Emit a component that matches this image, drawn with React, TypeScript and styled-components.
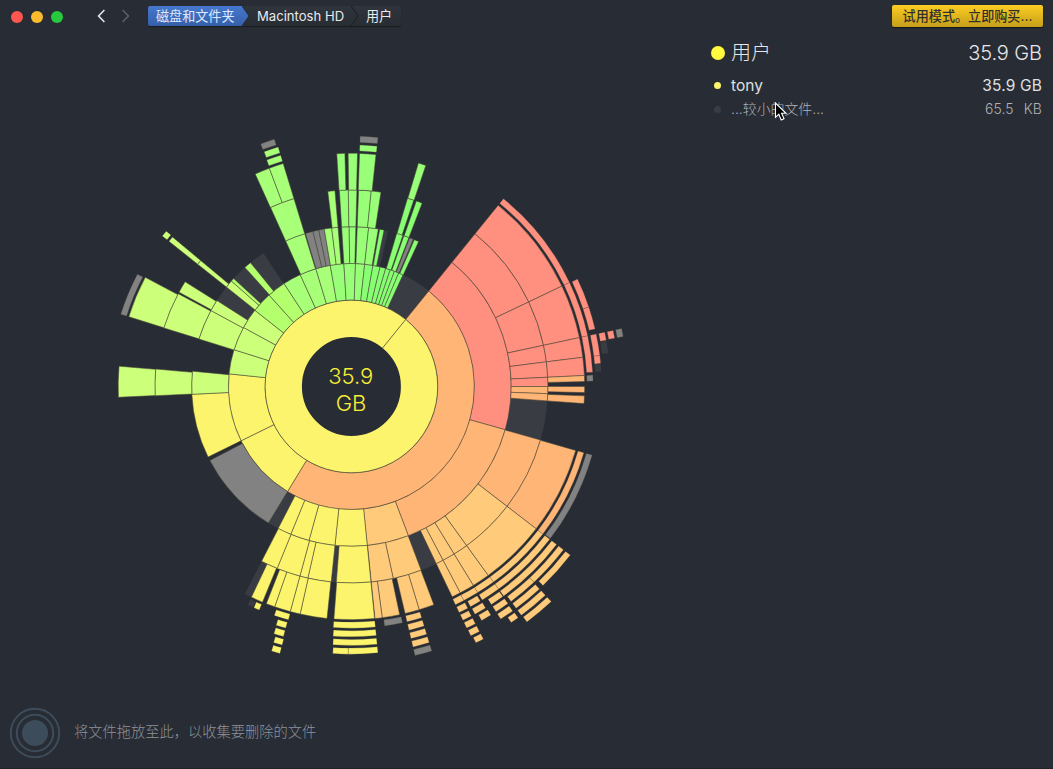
import React from "react";
import styled, { createGlobalStyle } from "styled-components";

const GlobalStyle = createGlobalStyle`
  * { box-sizing: border-box; }
  body { margin: 0; background: #282c34; overflow: hidden; }
`;

const Window = styled.div`
  position: relative;
  display: flex;
  flex-direction: column;
  width: 1053px;
  height: 769px;
  background: #282c34;
  border-bottom: 1px solid #1f2227;
  font-family: Inter, "Noto Sans CJK SC", sans-serif;
  color: #e4e5e6;
`;

const TitleBar = styled.header`
  display: flex;
  align-items: center;
  height: 33px;
  padding: 0 10px 0 11px;
`;

const Lights = styled.div`
  display: flex;
  gap: 8px;
  margin-right: 32px;
`;

const Light = styled.i<{ $color: string }>`
  width: 12px;
  height: 12px;
  border-radius: 50%;
  background: ${(p) => p.$color};
`;

const NavArrows = styled.svg`
  width: 40px;
  height: 20px;
  margin: 0 13px 1px 0;
  fill: none;
  stroke-width: 1.6;
`;

const Breadcrumb = styled.nav`
  display: flex;
  height: 20px;
  border-radius: 2px;
  background: linear-gradient(#30343c, #282c33);
  box-shadow: 0 1px 1px rgba(0, 0, 0, 0.4);
  margin: 0 auto 1px 0;
`;

const Crumb = styled.a<{ $width: number; $active?: boolean; $pad: number }>`
  position: relative;
  width: ${(p) => p.$width}px;
  padding-left: ${(p) => p.$pad}px;
  font-size: 13.1px;
  line-height: 20px;
  white-space: nowrap;
  color: ${(p) => (p.$active ? "#dde9ff" : "#e8eaec")};
  border-radius: 2px 0 0 2px;
  background: ${(p) => (p.$active ? "linear-gradient(#4678ce, #365fa9)" : "none")};
`;

const CrumbTip = styled.svg`
  position: absolute;
  left: 100%;
  top: 0;
  width: 8px;
  height: 20px;
`;

const BuyButton = styled.button`
  width: 151px;
  height: 22px;
  margin-bottom: 1px;
  padding: 0;
  border: 0;
  border-radius: 2px;
  background: linear-gradient(#fccd22, #c59f1a);
  box-shadow: 0 1px 1px rgba(0, 0, 0, 0.5);
  color: #30302c;
  font: 500 13.1px/22px Inter, "Noto Sans CJK SC", sans-serif;
  white-space: nowrap;
`;

const Content = styled.main`
  display: flex;
  flex: 1;
`;

const ChartPane = styled.section`
  width: 704px;
`;

const Chart = styled.svg`
  display: block;
  width: 704px;
  height: 660px;
`;

const Total = styled.text`
  font-family: Inter, sans-serif;
  font-size: 22px;
  font-weight: 300;
  fill: #f8ee35;
  text-anchor: middle;
`;

const FileList = styled.aside`
  width: 349px;
  padding: 6px 11px 0 7px;
`;

const Row = styled.div<{ $h: number; $size: number; $weight: number; $color: string }>`
  display: flex;
  align-items: center;
  height: ${(p) => p.$h}px;
  font-size: ${(p) => p.$size}px;
  font-weight: ${(p) => p.$weight};
  color: ${(p) => p.$color};
  white-space: pre;
`;

const DotCell = styled.span`
  display: flex;
  justify-content: center;
  width: 14px;
  margin-right: 6px;
`;

const Dot = styled.i<{ $size: number; $color: string }>`
  width: ${(p) => p.$size}px;
  height: ${(p) => p.$size}px;
  margin-right: ${(p) => (p.$size < 10 ? 1 : 0)}px;
  border-radius: 50%;
  background: ${(p) => p.$color};
`;

const Name = styled.span`
  flex: 1;
  line-height: 1;
`;

const Size = styled.span<{ $spacing?: number; $track?: number }>`
  line-height: 1;
  word-spacing: ${(p) => p.$spacing ?? 0}px;
  letter-spacing: ${(p) => p.$track ?? 0}px;
`;

const DropBar = styled.footer`
  display: flex;
  align-items: center;
  gap: 13px;
  height: 72px;
  padding-left: 9px;
`;

const Hint = styled.span`
  font-size: 14.25px;
  font-weight: 300;
  line-height: 20px;
  color: #8d929b;
`;

const Target = styled.svg`
  width: 52px;
  height: 52px;
  margin-top: 1px;
`;

const Cursor = styled.svg`
  position: absolute;
  left: 774px;
  top: 102px;
  width: 14px;
  height: 20px;
`;

const Y = "#fbf46c";
const O = "#ffb575";
const L = "#ffca7a";
const R = "#ff8f7e";
const G = "#828282";
const D = "#3a3c43";
const G1 = "#ccff7a";
const G2 = "#b4ff6e";
const G3 = "#a8ff78";
const G4 = "#9aff78";
const G5 = "#88ff73";

const CX = 351.4;
const CY = 353.5;

/* Rings 1-5 are wide; rings 6 and up are the thin outer levels. */
const radii = (ring: number): [number, number] =>
  ring <= 5
    ? [49.5 + (ring - 1) * 36.75, 49.5 + ring * 36.75]
    : [235.6 + (ring - 6) * 8.66, 241.7 + (ring - 6) * 8.66];

/* [ring, start angle, end angle, colour], clockwise degrees from 12 o'clock */
type Seg = [number, number, number, string];

const segments: Seg[] = [
  [2, 24.8, 39, D], [3, 207.3, 211.3, D], [3, 302.6, 326.6, D], [3, 11.9, 13.3, D],
  [4, 94.2, 105.7, D], [4, 154.4, 159.2, D], [4, 184.3, 185.9, D], [5, 205.4, 207.2, D],
  [6, 204, 205.4, D], [7, 84.8, 86.6, D], [8, 79.9, 82.6, D],
  [2, 39, 211.3, O], [2, 211.3, 243.8, Y], [2, 243.8, 275.9, Y],
  [2, 275.9, 287.4, G1], [2, 287.4, 298.7, G1], [2, 298.7, 308.3, G1], [2, 308.3, 318, G2],
  [2, 318, 326.8, G2], [2, 326.8, 335.4, G3], [2, 335.4, 343.2, G3], [2, 343.2, 350.1, G3],
  [2, 350.1, 356.5, G4], [2, 356.5, 361.9, G4], [2, 1.9, 6.2, G4], [2, 6.2, 10.1, G5],
  [2, 10.1, 13.5, G5], [2, 13.5, 16.2, G5], [2, 16.2, 18.4, G5], [2, 18.4, 20.5, G5],
  [2, 20.5, 22.6, G5], [2, 22.6, 24.8, G5],
  [3, 39, 105.7, R], [3, 105.7, 159.1, O], [3, 159.1, 174.3, L], [3, 174.3, 185.9, Y],
  [3, 185.9, 195.4, Y], [3, 195.4, 202.3, Y], [3, 202.3, 207.3, Y],
  [3, 211.3, 242.4, G], [3, 243.8, 267.2, Y], [3, 267.2, 275.5, G1],
  [4, 267.3, 275.1, G1], [5, 267.35, 275, G1],
  [3, 287.3, 298.4, G1], [4, 287.35, 298.2, G1], [5, 287.4, 297.9, G1],
  [3, 298.4, 302.6, G1], [4, 298.7, 302.2, G1], [6, 287.4, 297.7, G],
  [3, 308.5, 311.3, G1], [3, 311.3, 312.5, G2], [4, 308.5, 309.9, G1], [5, 308.5, 309.9, G1],
  [6, 308.5, 310, G1], [3, 318.2, 320.8, G2],
  [3, 335.7, 343, G3], [4, 335.7, 343, G3], [5, 335.65, 339.4, G3], [5, 339.4, 343, G3],
  [6, 339.5, 343, G3], [7, 339.6, 343, G3], [8, 339.5, 342.7, G],
  [3, 343.3, 346.1, G], [3, 346.1, 348.2, G], [3, 348.2, 350.2, G],
  [3, 350.2, 352.9, G3], [3, 352.9, 355.2, G3], [4, 353.1, 355.2, G3],
  [3, 356.5, 359.2, G4], [3, 359.2, 361.6, G4], [3, 2.1, 6.2, G4], [3, 6.2, 9.7, G4],
  [3, 10.2, 11.8, G5],
  [4, 356.5, 359.1, G4], [4, 359.1, 361.6, G4], [4, 2.1, 5.8, G4], [4, 5.8, 8.65, G4],
  [5, 356.4, 358.4, G4], [5, 359.2, 361.5, G4], [5, 2, 6.05, G4],
  [6, 2, 6.1, G4], [7, 2, 6.1, G],
  [3, 16.5, 18.8, G5], [4, 16.6, 18.5, G5], [5, 16.7, 18.6, G4],
  [3, 19.2, 21.1, G5], [4, 19.3, 21.1, G5], [3, 21.4, 22.8, G], [3, 23.2, 24.9, G5],
  [4, 39, 64.5, R], [4, 64.5, 77.9, R], [4, 77.9, 82.8, R], [4, 82.8, 87.3, R],
  [4, 87.3, 90, R], [4, 90, 92.1, O], [4, 92.1, 94.2, O],
  [5, 39, 64.5, R], [5, 64.5, 77.9, R], [5, 77.9, 82.8, R], [5, 82.8, 87.3, R],
  [5, 87.3, 88.8, O], [5, 90, 91.5, O], [5, 92.3, 94.2, O],
  [6, 39, 64.5, R], [6, 64.5, 77.9, R], [6, 77.9, 86.6, R], [6, 87.3, 88.7, G],
  [7, 64.6, 71.5, R], [7, 71.5, 76.7, R], [7, 77.9, 82.9, R], [7, 82.9, 84.7, R],
  [8, 77.9, 79.7, R], [9, 77.9, 79.6, R], [10, 77.9, 79.6, G],
  [4, 105.8, 127.6, O], [5, 105.9, 127.6, O], [6, 105.9, 127.6, O], [7, 105.9, 127.4, G],
  [4, 127.6, 144.1, L], [4, 144.1, 148.5, L], [4, 148.5, 152.2, L], [4, 152.2, 154.4, L],
  [5, 127.6, 144.1, L], [5, 144.1, 148.5, L], [5, 148.5, 152.2, L], [5, 152.2, 154.4, L],
  [6, 127.6, 144, L], [6, 144, 148.5, L], [6, 148.5, 152.3, L], [6, 152.3, 154.5, L],
  [7, 127.6, 144, L], [7, 144, 148.5, L], [7, 149, 151.6, L], [7, 152.3, 154.5, L],
  [8, 127.6, 144, L], [8, 144.2, 147.3, L], [8, 148.8, 151.5, L], [8, 152.4, 154.5, L],
  [9, 127.6, 137, L], [9, 137, 143.4, L], [9, 144.2, 147.3, L], [9, 148.6, 150.9, L],
  [9, 152.4, 154.5, L],
  [10, 127.6, 136.1, L], [10, 137.1, 143.4, L], [10, 144.3, 147.3, L], [10, 152.4, 154.4, L],
  [11, 137.1, 143.4, L], [11, 144.2, 145.9, L], [11, 152.4, 154.1, L], [12, 137.1, 143.3, L],
  [4, 159.2, 167.7, L], [4, 167.7, 174.2, L],
  [5, 159.3, 163.1, L], [5, 163.1, 166.7, L], [5, 168.05, 172.4, L], [5, 172.4, 174.2, L],
  [6, 167.8, 172.1, G],
  [6, 163.1, 166.7, L], [7, 163.1, 166.7, L], [8, 163.1, 166.7, L], [9, 163.1, 166.7, L],
  [10, 163.1, 166.7, G],
  [4, 174.3, 184.4, Y], [5, 174.3, 184.3, Y],
  [6, 174.3, 184.3, Y], [7, 174.3, 184.2, Y], [8, 174.3, 184.1, Y],
  [9, 174.3, 180.7, Y], [9, 180.7, 184, Y],
  [4, 185.9, 192.8, Y], [4, 192.8, 195.2, Y], [4, 195.2, 202.2, Y], [4, 202.2, 207.2, Y],
  [5, 186, 192.7, Y], [5, 192.7, 195.2, Y], [5, 195.2, 199.2, Y], [5, 199.2, 201.4, Y],
  [5, 202.4, 205.4, Y], [6, 202.4, 203.8, Y],
  [6, 195.1, 198.6, Y], [7, 195.2, 197.5, Y], [8, 195.2, 197.4, Y], [9, 195, 196.9, Y],
  [10, 195, 196.8, Y],
];

const at = (r: number, deg: number) => {
  const a = (deg * Math.PI) / 180;
  return `${(CX + r * Math.sin(a)).toFixed(2)} ${(CY - r * Math.cos(a)).toFixed(2)}`;
};

const sector = ([ring, a, b]: Seg) => {
  const [r0, r1] = radii(ring);
  const big = b - a > 180 ? 1 : 0;
  return `M${at(r0, a)}L${at(r1, a)}A${r1} ${r1} 0 ${big} 1 ${at(r1, b)}L${at(r0, b)}A${r0} ${r0} 0 ${big} 0 ${at(r0, a)}Z`;
};

const Sunburst = () => (
  <Chart viewBox="0 0 704 660">
    {segments.map((s, i) => (
      <path
        key={i}
        d={sector(s)}
        fill={s[3]}
        stroke={s[3] === D ? "none" : "#4b4a38"}
        strokeWidth={s[0] > 5 ? 0.25 : 0.55}
      />
    ))}
    <circle cx={CX} cy={CY} r={67.9} fill="none" stroke={Y} strokeWidth={36.8} />
    <circle cx={CX} cy={CY} r={86.3} fill="none" stroke="#4b4a38" strokeWidth={0.7} />
    <path d={`M${at(49.5, 39)}L${at(86.2, 39)}`} stroke="#4b4a38" strokeWidth={0.8} />
    <Total x={350.8} y={351}>35.9</Total>
    <Total x={351} y={378}>GB</Total>
  </Chart>
);

export default function App() {
  return (
    <Window>
      <GlobalStyle />
      <TitleBar>
        <Lights>
          <Light $color="#ff5650" />
          <Light $color="#fdbc2c" />
          <Light $color="#27c93f" />
        </Lights>
        <NavArrows viewBox="0 0 40 20">
          <path d="M9.4 4 3.6 10 9.4 16" stroke="#e5e6e8" />
          <path d="M27.6 4 33.4 10 27.6 16" stroke="#5b5f66" />
        </NavArrows>
        <Breadcrumb>
          <Crumb $width={94} $pad={8} $active>
            磁盘和文件夹
            <CrumbTip viewBox="0 0 8 20">
              <defs>
                <linearGradient id="tip" x2="0" y2="1">
                  <stop stopColor="#4678ce" />
                  <stop offset="1" stopColor="#365fa9" />
                </linearGradient>
              </defs>
              <path d="M-1 0H0L7 10 0 20H-1Z" fill="url(#tip)" />
              <path d="M0 0 7 10 0 20" fill="none" stroke="#20242a" strokeWidth="0.8" />
            </CrumbTip>
          </Crumb>
          <Crumb $width={109} $pad={15}>
            Macintosh HD
            <CrumbTip viewBox="0 0 8 20">
              <path d="M0 0 7 10 0 20" fill="none" stroke="#1f2227" strokeWidth="1.2" />
            </CrumbTip>
          </Crumb>
          <Crumb $width={50} $pad={15}>用户</Crumb>
        </Breadcrumb>
        <BuyButton>试用模式。立即购买...</BuyButton>
      </TitleBar>
      <Content>
        <ChartPane>
          <Sunburst />
        </ChartPane>
        <FileList>
          <Row $h={28} $size={20} $weight={300} $color="#e6e7e8">
            <DotCell><Dot $size={14} $color="#fffb3d" /></DotCell>
            <Name>用户</Name>
            <Size $track={-0.1}>35.9 GB</Size>
          </Row>
          <Row $h={37} $size={15.5} $weight={400} $color="#dfe0e1">
            <DotCell><Dot $size={7} $color="#fbf46c" /></DotCell>
            <Name>tony</Name>
            <Size $track={0.15}>35.9 GB</Size>
          </Row>
          <Row $h={11} $size={13.9} $weight={300} $color="#b0b2b5">
            <DotCell><Dot $size={7} $color="#3a3c43" /></DotCell>
            <Name>...较小的文件...</Name>
            <Size $spacing={6} $track={0.12}>65.5 KB</Size>
          </Row>
        </FileList>
      </Content>
      <DropBar>
        <Target viewBox="0 0 52 52">
          <circle cx="26" cy="26" r="13" fill="#3d4c5b" />
          <circle cx="26" cy="26" r="18.2" fill="none" stroke="#3d4c5b" strokeWidth="2" />
          <circle cx="26" cy="26" r="24.2" fill="none" stroke="#3d4c5b" strokeWidth="2" />
        </Target>
        <Hint>将文件拖放至此，以收集要删除的文件</Hint>
      </DropBar>
      <Cursor viewBox="0 0 14 20">
        <path d="M1.5 1V15.3L4.8 12.3 7.2 18 10 16.8 7.6 11.3H12Z" fill="#000" stroke="#fff" strokeWidth="1.1" />
      </Cursor>
    </Window>
  );
}
